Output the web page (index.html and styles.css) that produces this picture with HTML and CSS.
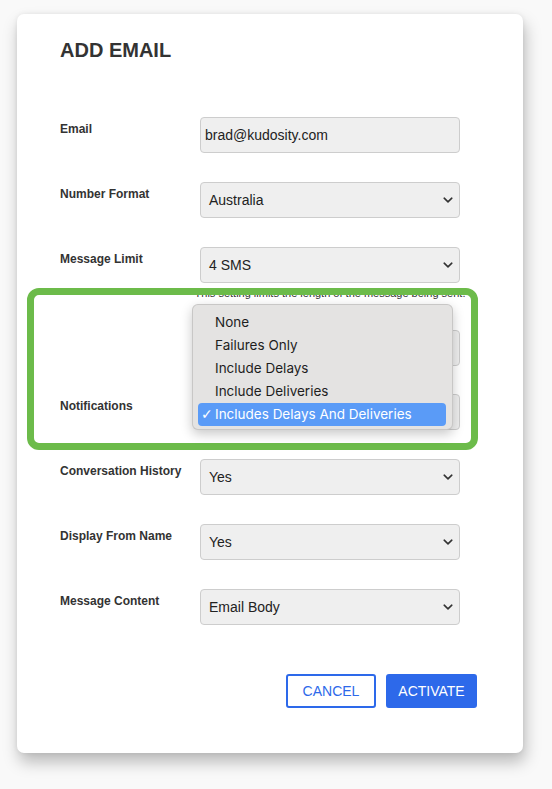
FILE: index.html
```html
<!DOCTYPE html>
<html lang="en">
<head>
<meta charset="utf-8">
<title>Add Email</title>
<link rel="stylesheet" href="styles.css">
</head>
<body>
<div class="card">
  <h1 class="title">ADD EMAIL</h1>

  <div class="row">
    <div class="label">Email</div>
    <div class="field"><div class="input">brad@kudosity.com</div></div>
  </div>

  <div class="row">
    <div class="label">Number Format</div>
    <div class="field"><div class="select"><span>Australia</span><svg class="chev" viewBox="0 0 10 6" width="10" height="6"><path d="M1.2 1.2 5 4.8 8.8 1.2" fill="none" stroke="#333" stroke-width="1.6" stroke-linecap="round" stroke-linejoin="round"/></svg></div></div>
  </div>

  <div class="row row-help">
    <div class="label">Message Limit</div>
    <div class="field">
      <div class="select"><span>4 SMS</span><svg class="chev" viewBox="0 0 10 6" width="10" height="6"><path d="M1.2 1.2 5 4.8 8.8 1.2" fill="none" stroke="#333" stroke-width="1.6" stroke-linecap="round" stroke-linejoin="round"/></svg></div>
      <div class="help">This setting limits the length of the message being sent.</div>
    </div>
  </div>

  <div class="row row-tight">
    <div class="label"></div>
    <div class="field"><div class="select"><span></span><svg class="chev" viewBox="0 0 10 6" width="10" height="6"><path d="M1.2 1.2 5 4.8 8.8 1.2" fill="none" stroke="#333" stroke-width="1.6" stroke-linecap="round" stroke-linejoin="round"/></svg></div></div>
  </div>

  <div class="row">
    <div class="label">Notifications</div>
    <div class="field"><div class="select"><span></span><svg class="chev" viewBox="0 0 10 6" width="10" height="6"><path d="M1.2 1.2 5 4.8 8.8 1.2" fill="none" stroke="#333" stroke-width="1.6" stroke-linecap="round" stroke-linejoin="round"/></svg></div></div>
  </div>

  <div class="row">
    <div class="label">Conversation History</div>
    <div class="field"><div class="select"><span>Yes</span><svg class="chev" viewBox="0 0 10 6" width="10" height="6"><path d="M1.2 1.2 5 4.8 8.8 1.2" fill="none" stroke="#333" stroke-width="1.6" stroke-linecap="round" stroke-linejoin="round"/></svg></div></div>
  </div>

  <div class="row">
    <div class="label">Display From Name</div>
    <div class="field"><div class="select"><span>Yes</span><svg class="chev" viewBox="0 0 10 6" width="10" height="6"><path d="M1.2 1.2 5 4.8 8.8 1.2" fill="none" stroke="#333" stroke-width="1.6" stroke-linecap="round" stroke-linejoin="round"/></svg></div></div>
  </div>

  <div class="row">
    <div class="label">Message Content</div>
    <div class="field"><div class="select"><span>Email Body</span><svg class="chev" viewBox="0 0 10 6" width="10" height="6"><path d="M1.2 1.2 5 4.8 8.8 1.2" fill="none" stroke="#333" stroke-width="1.6" stroke-linecap="round" stroke-linejoin="round"/></svg></div></div>
  </div>

  <div class="actions">
    <button class="btn btn-cancel">CANCEL</button>
    <button class="btn btn-activate">ACTIVATE</button>
  </div>

  <div class="highlight"></div>

  <ul class="menu">
    <li class="item">None</li>
    <li class="item">Failures Only</li>
    <li class="item">Include Delays</li>
    <li class="item">Include Deliveries</li>
    <li class="item item-selected"><span class="check">✓</span>Includes Delays And Deliveries</li>
  </ul>
</div>
</body>
</html>
```

FILE: styles.css
```css
* { box-sizing: border-box; }

html, body {
  margin: 0;
  padding: 0;
}

body {
  background: #f9f9f9;
  font-family: "Liberation Sans", Arial, sans-serif;
  color: #333;
  padding: 14px 0 36px 17px;
}

.card {
  position: relative;
  width: 506px;
  height: 739px;
  background: #fff;
  border-radius: 7px;
  box-shadow: 2px 9px 16px rgba(0, 0, 0, 0.26), 0 0 5px rgba(0, 0, 0, 0.07);
  padding: 24px 46px 0 43px;
}

.title {
  margin: 0 0 55px 0;
  font-size: 20px;
  line-height: 24px;
  font-weight: bold;
  color: #333;
}

.row {
  display: grid;
  grid-template-columns: 140px 260px;
  margin-bottom: 29px;
}

.row-tight { margin-bottom: 28px; }

.label {
  font-size: 12px;
  line-height: 14px;
  font-weight: bold;
  color: #333;
  padding-top: 5px;
}

.input, .select {
  height: 36px;
  background: #efefef;
  border: 1px solid #cdcdcd;
  border-radius: 4px;
  font-size: 14px;
  color: #222;
  display: flex;
  align-items: center;
}

.input { padding-left: 4px; }

.select {
  padding: 0 6px 0 8px;
  justify-content: space-between;
}

.chev { flex: none; }

.help {
  font-size: 11px;
  line-height: 12px;
  text-align: center;
  color: #333;
  margin: 4px -6px 2px;
  white-space: nowrap;
}

.actions {
  display: flex;
  justify-content: flex-end;
  gap: 10px;
  margin-top: 49px;
}

.btn {
  height: 34px;
  font-family: "Liberation Sans", Arial, sans-serif;
  font-size: 14px;
  border-radius: 3px;
  border: 2px solid #2d69ea;
  padding: 0;
  cursor: pointer;
}

.btn-cancel {
  width: 90px;
  background: #fff;
  color: #2d69ea;
}

.btn-activate {
  width: 91px;
  background: #2d69ea;
  color: #fff;
}

.highlight {
  position: absolute;
  left: 10px;
  top: 274px;
  width: 451px;
  height: 162px;
  border: 7px solid #6cbb4a;
  border-radius: 12px;
  pointer-events: none;
}

.menu {
  position: absolute;
  left: 175px;
  top: 290px;
  width: 261px;
  height: 126px;
  margin: 0;
  padding: 6px 6px 5px 5px;
  list-style: none;
  background: #e4e3e2;
  border: 1px solid rgba(0, 0, 0, 0.12);
  border-radius: 6px;
  box-shadow: 0 4px 12px rgba(0, 0, 0, 0.22);
  font-family: Inter, "Noto Sans", sans-serif;
  font-size: 13.5px;
  color: #1e1e1e;
}

.item {
  height: 23px;
  line-height: 23px;
  padding-left: 17px;
  border-radius: 4px;
  white-space: nowrap;
  position: relative;
}

.item-selected {
  background: #5a9bf7;
  color: #fff;
}

.check {
  position: absolute;
  left: 3px;
  top: 0;
  font-family: "DejaVu Sans", sans-serif;
  font-size: 14px;
  font-weight: bold;
}
```
